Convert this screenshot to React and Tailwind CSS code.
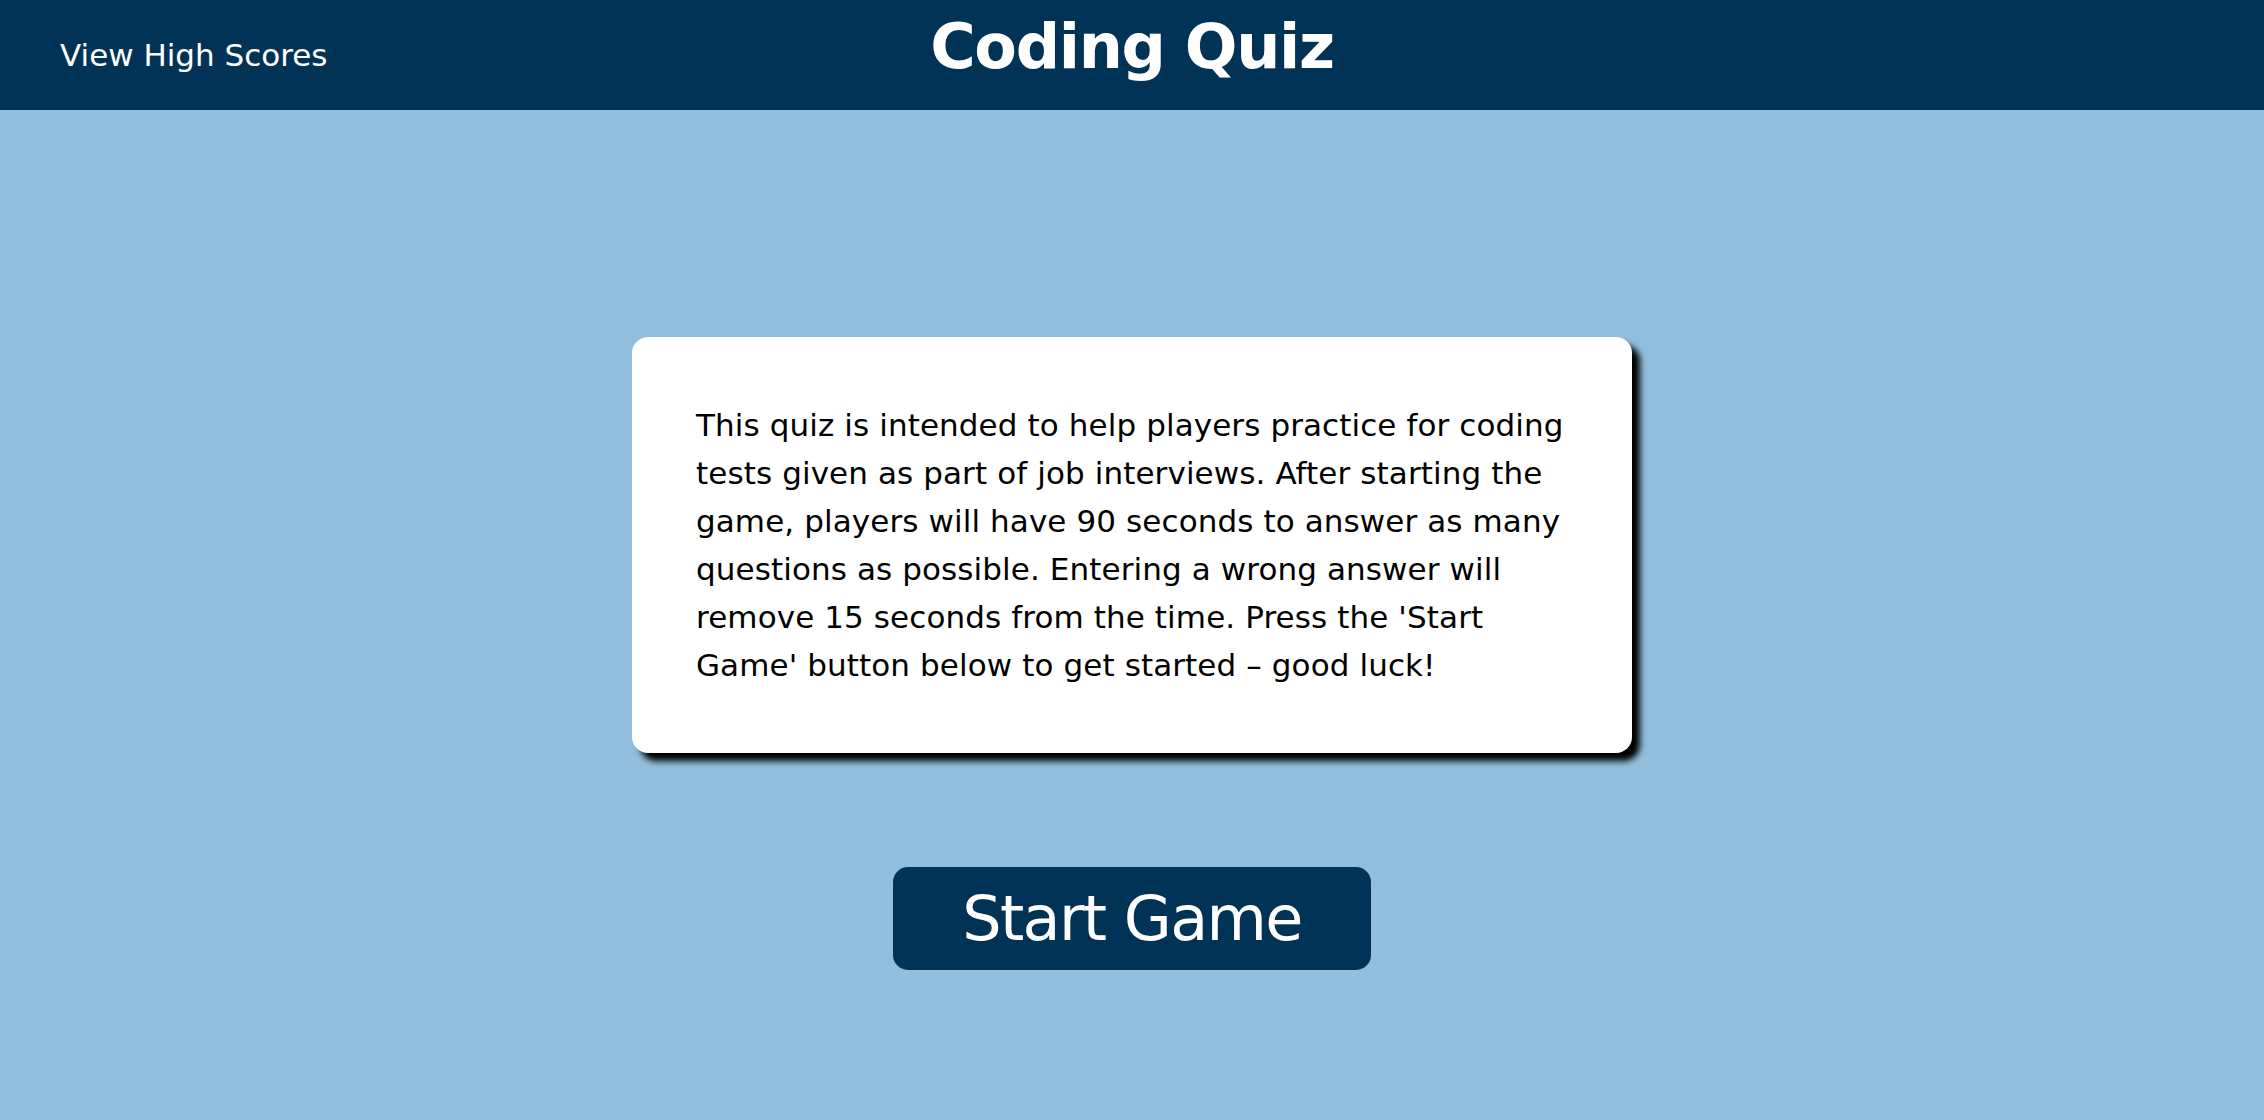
import React from "react";

export default function App() {
  const font = { fontFamily: '"DejaVu Sans", "Liberation Sans", sans-serif' };
  return (
    <div className="min-h-[1120px] w-full bg-[#91bedd]" style={font}>
      <header className="relative h-[110px] w-full bg-[#013356] text-white">
        <div className="flex h-full items-center pl-[60px]">
          <a className="text-[31px] leading-none text-white">View High Scores</a>
        </div>
        <h1 className="absolute left-0 right-0 top-0 text-center text-[62px] font-bold leading-[94px] tracking-[-1.3px] text-white">
          Coding Quiz
        </h1>
      </header>
      <main className="flex flex-col items-center pt-[227px]">
        <div className="w-[1000px] rounded-[16px] bg-white pb-[64px] pl-[64px] pr-[56px] pt-[64px] shadow-[8px_8px_6px_#000]">
          <p className="text-[31px] leading-[48px] tracking-[0.1px] text-black">
            This quiz is intended to help players practice for coding tests given as part of job interviews. After starting the game, players will have 90 seconds to answer as many questions as possible. Entering a wrong answer will remove 15 seconds from the time. Press the 'Start Game' button below to get started – good luck!
          </p>
        </div>
        <button className="mt-[114px] flex h-[103px] w-[478px] items-center justify-center rounded-[15px] bg-[#013356] text-[62px] leading-none tracking-[-1.6px] text-white">
          Start Game
        </button>
      </main>
    </div>
  );
}
